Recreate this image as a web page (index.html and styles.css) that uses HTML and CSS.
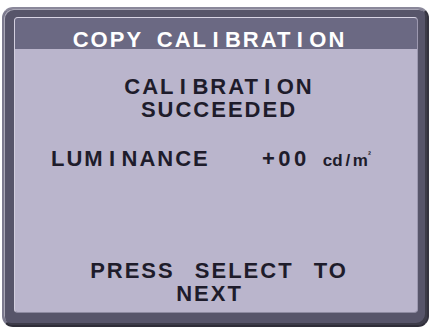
FILE: index.html
```html
<!DOCTYPE html>
<html>
<head>
<meta charset="utf-8">
<link rel="stylesheet" href="styles.css">
</head>
<body>
<div class="frame">
  <div class="panel">
    <div class="header even">COPY CAL<span class="i">I</span>BRAT<span class="i">I</span>ON</div>
    <div class="msg">
      <div class="line">CAL<span class="i">I</span>BRAT<span class="i">I</span>ON</div>
      <div class="line">SUCCEEDED</div>
    </div>
    <div class="row">
      <span class="label">LUM<span class="i">I</span>NANCE</span>
      <span class="value">+00</span>
      <span class="unit">cd / m<span class="sup">²</span></span>
    </div>
    <div class="foot">
      <div class="line press">PRESS SELECT TO</div>
      <div class="line even">NEXT</div>
    </div>
  </div>
</div>
</body>
</html>
```
FILE: styles.css
```css
html, body {
  margin: 0;
  padding: 0;
  background: #ffffff;
}
body {
  width: 432px;
  height: 329px;
  overflow: hidden;
  font-family: "Liberation Sans", Arial, sans-serif;
  font-weight: bold;
}
.frame {
  box-sizing: border-box;
  width: 427px;
  height: 320px;
  margin: 7px 0 0 2px;
  border-radius: 11px;
  background: #57556a;
  border: 2px solid;
  border-color: #8a889a #34333f #2f2e39 #7c7a8e;
  box-shadow: inset 1px 1px 0 #a9a7b6, inset -2px -2px 0 #3d3c49;
  padding: 8px 9px 12px 10px;
  display: flex;
}
.panel {
  flex: 1;
  display: flex;
  flex-direction: column;
  background: #bab5cc;
  border: 1px solid;
  border-color: #d8d4e4 #9d99b0 #8d8aa0 #d2cede;
  border-radius: 4px;
  overflow: hidden;
  color: #1e1c2b;
  font-size: 22px;
  letter-spacing: 2px;
}
.i {
  padding: 0 4.4px;
}
.header {
  box-sizing: border-box;
  height: 31px;
  padding-top: 11px;
  line-height: 21px;
  background: #6b6983;
  color: #ffffff;
  text-align: center;
  word-spacing: 6px;
}
.line {
  line-height: 23px;
  text-align: center;
  padding-left: 6px;
}
.line.even {
  padding-left: 0;
  padding-right: 13px;
}
.header.even {
  padding-right: 13px;
}
.msg {
  margin-top: 26px;
}
.row {
  display: flex;
  align-items: baseline;
  margin-top: 23px;
  padding-left: 36px;
  line-height: 22px;
}
.label {
  width: 211px;
}
.value {
  letter-spacing: 3.5px;
}
.unit {
  margin-left: 13px;
  font-size: 17px;
  letter-spacing: 0;
  word-spacing: -2px;
}
.sup {
  font-size: 9px;
  vertical-align: 8px;
}
.foot {
  margin-top: auto;
  padding-bottom: 7px;
}
.press {
  word-spacing: 12px;
}
```
